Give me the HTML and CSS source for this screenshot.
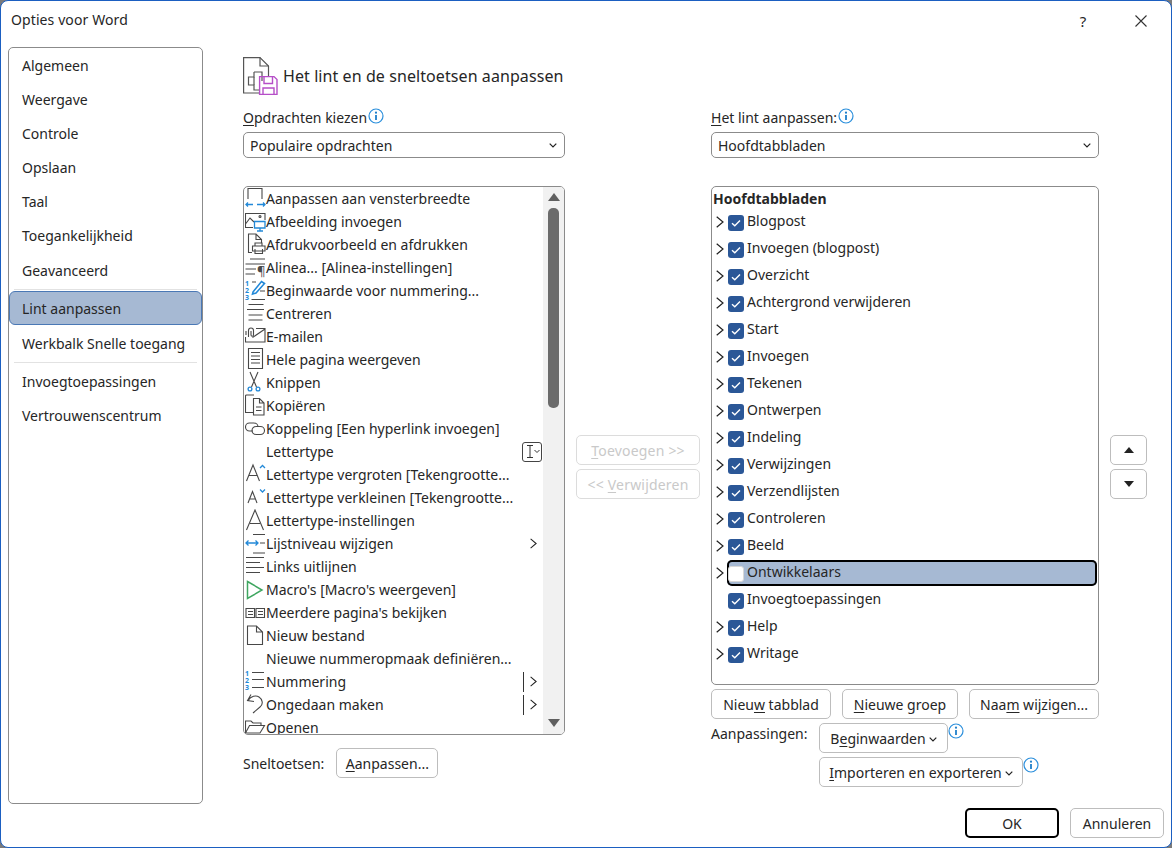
FILE: index.html
```html
<!DOCTYPE html>
<html lang="nl">

<head>
    <meta charset="UTF-8">
    <title>Opties voor Word</title>
    <link rel="stylesheet" href="styles.css">
</head>

<body>
    <svg class="defs" xmlns="http://www.w3.org/2000/svg">
        <symbol id="chev" viewBox="0 0 8 12"><path d="M.7.7L7 6L.7 11.3" fill="none" stroke="#222" stroke-width="1.2"/></symbol>
        <symbol id="tick" viewBox="0 0 16 16"><path d="M4 8.2L6.8 10.8L12 5.6" fill="none" stroke="#fff" stroke-width="1.4"/></symbol>
        <symbol id="info" viewBox="0 0 16 16"><circle cx="8" cy="8" r="7" fill="#fff" stroke="#2b8fdc" stroke-width="1.2"/><path d="M8 7V12" stroke="#1f7fca" stroke-width="1.8"/><circle cx="8" cy="4.7" r="1.1" fill="#1f7fca"/></symbol>
        <symbol id="down" viewBox="0 0 8 5"><path d="M.7.7L4 4L7.3.7" fill="none" stroke="#222" stroke-width="1.2"/></symbol>
    </svg>

    <div class="window">
        <div class="titlebar">
            <span class="title">Opties voor Word</span>
            <span class="title-btn">?</span>
            <span class="title-btn">
                <svg width="12" height="12" viewBox="0 0 12 12"><path d="M.5.5L11.5 11.5M11.5.5L.5 11.5" stroke="#333" stroke-width="1.1"/></svg>
            </span>
        </div>

        <div class="dialog-body">
            <ul class="sidebar">
                <li>Algemeen</li>
                <li>Weergave</li>
                <li>Controle</li>
                <li>Opslaan</li>
                <li>Taal</li>
                <li>Toegankelijkheid</li>
                <li class="advanced">Geavanceerd</li>
                <li class="divider"></li>
                <li class="active">Lint aanpassen</li>
                <li>Werkbalk Snelle toegang</li>
                <li class="divider"></li>
                <li>Invoegtoepassingen</li>
                <li>Vertrouwenscentrum</li>
            </ul>

            <div class="main">
                <div class="heading">
                    <svg class="heading-icon" width="35" height="38" viewBox="0 0 35 38">
                        <g fill="none" stroke="#555" stroke-width="1.2">
                            <path d="M16 36H.6V.6H17L25.5 9V19"/>
                            <path d="M17 .6V9H25.5"/>
                            <path d="M11 15H19V24M11 15V20H5.5V28H11V33H16"/>
                            <path d="M11 20V28"/>
                        </g>
                        <g fill="none" stroke="#b64fc8" stroke-width="1.4">
                            <path d="M16.6 19.6H31L34 22.6V37.4H16.6Z"/>
                            <path d="M21 19.6V26.5H29.5V19.6M20 37.4V31H31V37.4"/>
                        </g>
                    </svg>
                    <span>Het lint en de sneltoetsen aanpassen</span>
                </div>

                <div class="columns">
                    <div class="col-left">
                        <div class="field-label"><span><u>O</u>pdrachten kiezen</span><svg class="info"><use href="#info"/></svg></div>
                        <div class="select"><span>Populaire opdrachten</span><svg class="down"><use href="#down"/></svg></div>

                        <div class="list command-list">
                            <ul class="commands">
                                <li>
                                    <svg class="ico" viewBox="0 0 21 23"><path d="M3 12V1.5H17V12"/><path class="blue" d="M1 17.5H8M3 15.5L1 17.5L3 19.5M12 17.5H20M18 15.5L20 17.5L18 19.5"/></svg>
                                    Aanpassen aan vensterbreedte
                                </li>
                                <li>
                                    <svg class="ico" viewBox="0 0 21 23"><path d="M8 17.5H.5V3.5H20V10M.5 14L5 8L9 12"/><circle cx="15" cy="6.5" r="1"/><path class="blue" d="M9.5 11.5H20V18H9.5ZM15 18V21M12 21H18"/></svg>
                                    Afbeelding invoegen
                                </li>
                                <li>
                                    <svg class="ico" viewBox="0 0 21 23"><path d="M7 19.5H3.5V1H11L16.5 6.5V10M11 1V6.5H16.5"/><path d="M7.5 13H20V18H7.5ZM10 13V10H17V13M10 16V20.5H17.5V16"/></svg>
                                    Afdrukvoorbeeld en afdrukken
                                </li>
                                <li>
                                    <svg class="ico" viewBox="0 0 21 23"><path d="M5 3H20M.5 8H20M.5 13H11M.5 18H10"/><text class="ico-text para" x="12" y="20">¶</text></svg>
                                    Alinea... [Alinea-instellingen]
                                </li>
                                <li>
                                    <svg class="ico" viewBox="0 0 21 23"><path d="M7 3H11M15 12H20M6.5 20.5H20"/><path class="blue thick" d="M8 13L16.5 2.5L19.5 4.5L11 14L7.5 15Z"/><text class="ico-text" x="0" y="7">1</text><text class="ico-text" x="0" y="14">2</text><text class="ico-text" x="0" y="21">3</text></svg>
                                    Beginwaarde voor nummering...
                                </li>
                                <li>
                                    <svg class="ico" viewBox="0 0 21 23"><path d="M3.5 2.5H18.5M2 7.5H19M3.5 13H17.5M3.5 18H17.5"/></svg>
                                    Centreren
                                </li>
                                <li>
                                    <svg class="ico" viewBox="0 0 21 23"><path d="M11 3.5H20V17H.5V12M7.5 12.5L20 4"/><path d="M3.5 12V5.5A2.5 2.5 0 0 1 8.5 5.5V10A1.2 1.2 0 0 1 6 10V6M1 10V6"/></svg>
                                    E-mailen
                                </li>
                                <li>
                                    <svg class="ico" viewBox="0 0 21 23"><path d="M3.5 .5H17.5V20.5H3.5ZM6 4.5H15M6 8H15M6 11.5H15M6 15H15"/></svg>
                                    Hele pagina weergeven
                                </li>
                                <li>
                                    <svg class="ico" viewBox="0 0 21 23"><path d="M5 1L11.5 16M13 1L6.5 16"/><circle class="blue" cx="5" cy="18" r="1.9"/><circle class="blue" cx="13" cy="18" r="1.9"/></svg>
                                    Knippen
                                </li>
                                <li>
                                    <svg class="ico" viewBox="0 0 21 23"><path d="M8 18.5H.5V2Q.5 1 1.5 1H9"/><path d="M8.5 21V4.5H14.5L19 9V21ZM14.5 4.5V9H19M11 13H16.5M11 16.5H16.5"/></svg>
                                    Kopiëren
                                </li>
                                <li>
                                    <svg class="ico" viewBox="0 0 21 23"><path d="M8 14H4.5A4 4 0 0 1 4.5 6H9A4 4 0 0 1 13 10"/><path d="M7 13.5A4 4 0 0 1 11 9.5H15.5A4 4 0 0 1 15.5 17.5H11A4 4 0 0 1 7 13.5Z"/></svg>
                                    Koppeling [Een hyperlink invoegen]
                                </li>
                                <li>
                                    <span class="ico ico-blank"></span>
                                    Lettertype
                                    <span class="combo-box"><svg width="17" height="17" viewBox="0 0 17 17"><path d="M3 2.5H9M3 14.5H9M6 2.5V14.5" fill="none" stroke="#333"/><path d="M10.5 7L13 9.5L15.5 7" fill="none" stroke="#333"/></svg></span>
                                </li>
                                <li>
                                    <svg class="ico" viewBox="0 0 21 23"><path d="M1.5 18L8 2L14.5 18M4 12.5H12"/><path class="blue" d="M15 5L17.5 2.5L20 5"/></svg>
                                    Lettertype vergroten [Tekengrootte...
                                </li>
                                <li>
                                    <svg class="ico" viewBox="0 0 21 23"><path d="M3 17L7.5 5.5L12 17M5 13H10"/><path class="blue" d="M15 3.5L17.5 6L20 3.5"/></svg>
                                    Lettertype verkleinen [Tekengrootte...
                                </li>
                                <li>
                                    <svg class="ico" viewBox="0 0 21 23"><path d="M1.5 21L10 1L18.5 21M5 14.5H15"/></svg>
                                    Lettertype-instellingen
                                </li>
                                <li>
                                    <svg class="ico" viewBox="0 0 21 23"><path d="M8 2.5H20M15 11H20M8 21H20"/><path class="blue" d="M1 11H13M3.5 8.5L1 11L3.5 13.5M10.5 8.5L13 11L10.5 13.5"/></svg>
                                    Lijstniveau wijzigen
                                    <svg class="row-chev"><use href="#chev"/></svg>
                                </li>
                                <li>
                                    <svg class="ico" viewBox="0 0 21 23"><path d="M1 2.5H19M1 7.5H15M1 12.5H19M1 17.5H15"/></svg>
                                    Links uitlijnen
                                </li>
                                <li>
                                    <svg class="ico" viewBox="0 0 21 23"><path class="green" d="M2.5 3.5L17 12L2.5 20.5Z"/></svg>
                                    Macro's [Macro's weergeven]
                                </li>
                                <li>
                                    <svg class="ico" viewBox="0 0 21 23"><path d="M1 7.5H9.5V16.5H1ZM11 7.5H19.5V16.5H11ZM3 10.5H8M3 13.5H8M13 10.5H18M13 13.5H18"/></svg>
                                    Meerdere pagina's bekijken
                                </li>
                                <li>
                                    <svg class="ico" viewBox="0 0 21 23"><path d="M2.5 20.5V2H11.5L17.5 8V20.5ZM11.5 2V8H17.5"/></svg>
                                    Nieuw bestand
                                </li>
                                <li>
                                    <span class="ico ico-blank"></span>
                                    Nieuwe nummeropmaak definiëren...
                                </li>
                                <li>
                                    <svg class="ico" viewBox="0 0 21 23"><path d="M7 2.5H19M7 9.5H19M7 17.5H19"/><text class="ico-text" x="0" y="6">1</text><text class="ico-text" x="0" y="13">2</text><text class="ico-text" x="0" y="20">3</text></svg>
                                    Nummering
                                    <span class="split-bar"></span><svg class="split-chev"><use href="#chev"/></svg>
                                </li>
                                <li>
                                    <svg class="ico" viewBox="0 0 21 23"><path d="M3 7.5C6 3 11 2 14 4S19 11 15 14L8 20M6 1.5L2.5 7.5L9 8.5"/></svg>
                                    Ongedaan maken
                                    <span class="split-bar"></span><svg class="split-chev"><use href="#chev"/></svg>
                                </li>
                                <li>
                                    <svg class="ico" viewBox="0 0 21 23"><path d="M.5 17V5H6L8 7H16V9.5M.5 17H15L19.5 9.5H4.5Z"/></svg>
                                    Openen
                                </li>
                            </ul>
                            <div class="scrollbar">
                                <span class="scroll-arrow up"></span>
                                <span class="scroll-thumb"></span>
                                <span class="scroll-arrow dn"></span>
                            </div>
                        </div>

                        <div class="shortcut-row">
                            <span>Sneltoetsen:</span>
                            <button class="btn btn-shortcut"><u>A</u>anpassen...</button>
                        </div>
                    </div>

                    <div class="col-mid">
                        <button class="btn btn-disabled"><u>T</u>oevoegen &gt;&gt;</button>
                        <button class="btn btn-disabled">&lt;&lt; <u>V</u>erwijderen</button>
                    </div>

                    <div class="col-right">
                        <div class="field-label"><span><u>H</u>et lint aanpassen:</span><svg class="info"><use href="#info"/></svg></div>
                        <div class="select"><span>Hoofdtabbladen</span><svg class="down"><use href="#down"/></svg></div>

                        <div class="list tab-list">
                            <div class="tab-title">Hoofdtabbladen</div>
                            <ul class="tabs">
                                <li><svg class="chev"><use href="#chev"/></svg><div class="tab-label"><span class="check"><svg><use href="#tick"/></svg></span><span>Blogpost</span></div></li>
                                <li><svg class="chev"><use href="#chev"/></svg><div class="tab-label"><span class="check"><svg><use href="#tick"/></svg></span><span>Invoegen (blogpost)</span></div></li>
                                <li><svg class="chev"><use href="#chev"/></svg><div class="tab-label"><span class="check"><svg><use href="#tick"/></svg></span><span>Overzicht</span></div></li>
                                <li><svg class="chev"><use href="#chev"/></svg><div class="tab-label"><span class="check"><svg><use href="#tick"/></svg></span><span>Achtergrond verwijderen</span></div></li>
                                <li><svg class="chev"><use href="#chev"/></svg><div class="tab-label"><span class="check"><svg><use href="#tick"/></svg></span><span>Start</span></div></li>
                                <li><svg class="chev"><use href="#chev"/></svg><div class="tab-label"><span class="check"><svg><use href="#tick"/></svg></span><span>Invoegen</span></div></li>
                                <li><svg class="chev"><use href="#chev"/></svg><div class="tab-label"><span class="check"><svg><use href="#tick"/></svg></span><span>Tekenen</span></div></li>
                                <li><svg class="chev"><use href="#chev"/></svg><div class="tab-label"><span class="check"><svg><use href="#tick"/></svg></span><span>Ontwerpen</span></div></li>
                                <li><svg class="chev"><use href="#chev"/></svg><div class="tab-label"><span class="check"><svg><use href="#tick"/></svg></span><span>Indeling</span></div></li>
                                <li><svg class="chev"><use href="#chev"/></svg><div class="tab-label"><span class="check"><svg><use href="#tick"/></svg></span><span>Verwijzingen</span></div></li>
                                <li><svg class="chev"><use href="#chev"/></svg><div class="tab-label"><span class="check"><svg><use href="#tick"/></svg></span><span>Verzendlijsten</span></div></li>
                                <li><svg class="chev"><use href="#chev"/></svg><div class="tab-label"><span class="check"><svg><use href="#tick"/></svg></span><span>Controleren</span></div></li>
                                <li><svg class="chev"><use href="#chev"/></svg><div class="tab-label"><span class="check"><svg><use href="#tick"/></svg></span><span>Beeld</span></div></li>
                                <li><svg class="chev"><use href="#chev"/></svg><div class="tab-label selected"><span class="check off"></span><span>Ontwikkelaars</span></div></li>
                                <li><span class="chev"></span><div class="tab-label"><span class="check"><svg><use href="#tick"/></svg></span><span>Invoegtoepassingen</span></div></li>
                                <li><svg class="chev"><use href="#chev"/></svg><div class="tab-label"><span class="check"><svg><use href="#tick"/></svg></span><span>Help</span></div></li>
                                <li><svg class="chev"><use href="#chev"/></svg><div class="tab-label"><span class="check"><svg><use href="#tick"/></svg></span><span>Writage</span></div></li>
                            </ul>
                        </div>

                        <div class="tab-buttons">
                            <button class="btn btn-newtab">Nieu<u>w</u> tabblad</button>
                            <button class="btn btn-newgroup"><u>N</u>ieuwe groep</button>
                            <button class="btn btn-rename">Naa<u>m</u> wijzigen...</button>
                        </div>

                        <div class="custom-row">
                            <span class="custom-label">Aanpassingen:</span>
                            <div class="custom-stack">
                                <div class="custom-item">
                                    <button class="btn btn-reset">B<u>e</u>ginwaarden<svg class="down"><use href="#down"/></svg></button>
                                    <svg class="info"><use href="#info"/></svg>
                                </div>
                                <div class="custom-item">
                                    <button class="btn btn-import"><u>I</u>mporteren en exporteren<svg class="down"><use href="#down"/></svg></button>
                                    <svg class="info"><use href="#info"/></svg>
                                </div>
                            </div>
                        </div>
                    </div>

                    <div class="col-arrows">
                        <button class="btn btn-arrow"><span class="tri-up"></span></button>
                        <button class="btn btn-arrow"><span class="tri-down"></span></button>
                    </div>
                </div>
            </div>
        </div>

        <div class="dialog-footer">
            <button class="btn btn-ok">OK</button>
            <button class="btn btn-cancel">Annuleren</button>
        </div>
    </div>
</body>

</html>
```
FILE: styles.css
```css
:root {
    --text-color: #262626;
    --border-strong: #8b8b8b;
    --border-light: #bdbdbd;
    --select-color: #a6b9d3;
    --check-color: #2b5797;
    --icon-grey: #484848;
    --icon-blue: #2389d8;
}

* {
    margin: 0;
    padding: 0;
    box-sizing: border-box;
}

html {
    background: #7a7a7a;
}

body {
    font-family: "Noto Sans", sans-serif;
    font-size: 14px;
    color: var(--text-color);
}

ul {
    list-style: none;
}

u {
    text-underline-offset: 2px;
}

.defs {
    display: none;
}

.window {
    width: 1172px;
    height: 848px;
    background: #fff;
    border: 1px solid #1b5fc1;
    border-radius: 8px;
    overflow: hidden;
}

/* Title bar */
.titlebar {
    height: 39px;
    padding-right: 1px;
    display: flex;
    align-items: center;
}

.title {
    flex: 1;
    padding: 0 0 2px 10px;
    letter-spacing: 0.1px;
}

.title-btn {
    width: 58px;
    height: 39px;
    display: flex;
    align-items: center;
    justify-content: center;
    font-size: 15px;
}

/* Layout */
.dialog-body {
    display: flex;
    height: 764px;
    padding: 7px 0 0 7px;
}

.sidebar {
    width: 195px;
    height: 757px;
    flex-shrink: 0;
    border: 1px solid var(--border-strong);
    border-radius: 5px;
}

.sidebar li {
    height: 34px;
    padding-left: 13px;
    display: flex;
    align-items: center;
}

.sidebar li.advanced {
    margin-top: 1px;
}

.sidebar li.divider {
    height: 1px;
    margin: 2px 5px 1px;
    padding: 0;
    background: #e2e2e2;
}

.sidebar li.active {
    background: var(--select-color);
    border: 1px solid #4a78b5;
    border-radius: 6px;
    padding-left: 12px;
    margin-bottom: 1px;
}

.main {
    margin-left: 40px;
    padding-top: 10px;
}

.heading {
    height: 38px;
    display: flex;
    align-items: center;
    gap: 5px;
    font-size: 16px;
    letter-spacing: 0.08px;
}

.heading-icon {
    align-self: flex-start;
}

.columns {
    display: flex;
    gap: 11px;
    margin-top: 13px;
}

.col-left {
    width: 322px;
}

.col-mid {
    width: 124px;
    padding-top: 327px;
    display: flex;
    flex-direction: column;
    gap: 4px;
}

.col-right {
    width: 388px;
}

.col-arrows {
    width: 37px;
    padding-top: 327px;
    display: flex;
    flex-direction: column;
    gap: 4px;
}

/* Fields */
.field-label {
    height: 24px;
    display: flex;
    align-items: flex-start;
}

.info {
    width: 16px;
    height: 16px;
    flex-shrink: 0;
}

.field-label .info {
    margin-left: 1px;
}

.select {
    height: 26px;
    border: 1px solid var(--border-strong);
    border-radius: 5px;
    display: flex;
    align-items: center;
    justify-content: space-between;
    padding: 0 7px 0 6px;
}

.down {
    width: 8px;
    height: 5px;
    flex-shrink: 0;
}

.list {
    margin-top: 28px;
    border: 1px solid var(--border-strong);
    border-radius: 5px;
    overflow: hidden;
}

/* Command list */
.command-list {
    height: 549px;
    display: flex;
}

.commands {
    flex: 1;
    padding-left: 1px;
}

.commands li {
    height: 23px;
    display: flex;
    align-items: center;
    white-space: nowrap;
    padding-right: 1px;
}

.ico {
    width: 21px;
    height: 23px;
    flex-shrink: 0;
    fill: none;
    stroke: var(--icon-grey);
    stroke-width: 1.1;
}

.ico-blank {
    display: inline-block;
}

.ico .blue {
    stroke: var(--icon-blue);
    stroke-width: 1.3;
}

.ico .thick {
    stroke-width: 1.6;
}

.ico .green {
    stroke: #3fa660;
    stroke-width: 1.5;
}

.ico-text {
    font-family: "Noto Sans", sans-serif;
    font-size: 7px;
    font-weight: 700;
    fill: var(--icon-blue);
    stroke: none;
}

.ico-text.para {
    font-size: 13px;
    font-weight: 400;
    fill: var(--icon-grey);
}

.combo-box {
    margin-left: auto;
    width: 20px;
    height: 20px;
    border: 1px solid #444;
    border-radius: 3px;
    display: flex;
    align-items: center;
    justify-content: center;
}

.row-chev {
    margin-left: auto;
    margin-right: 5px;
    width: 7px;
    height: 11px;
}

.split-bar {
    margin-left: auto;
    width: 1px;
    height: 20px;
    background: #333;
}

.split-chev {
    margin: 0 5px 0 6px;
    width: 7px;
    height: 11px;
}

.scrollbar {
    width: 21px;
    flex-shrink: 0;
    background: #f1f1f1;
    display: flex;
    flex-direction: column;
    align-items: center;
}

.scroll-thumb {
    width: 11px;
    height: 200px;
    margin-top: 7px;
    background: #6b6b6b;
    border-radius: 5px;
}

.scroll-arrow {
    width: 0;
    height: 0;
    border-left: 6px solid transparent;
    border-right: 6px solid transparent;
}

.scroll-arrow.up {
    margin-top: 6px;
    border-bottom: 8px solid #5f5f5f;
}

.scroll-arrow.dn {
    margin-top: auto;
    margin-bottom: 7px;
    border-top: 8px solid #5f5f5f;
}

/* Buttons */
.btn {
    font-family: inherit;
    font-size: 14px;
    color: var(--text-color);
    height: 30px;
    background: #fff;
    border: 1px solid var(--border-light);
    border-radius: 5px;
}

.btn .down {
    margin-left: 3px;
    vertical-align: 2px;
}

.btn-disabled {
    color: #c9c9c9;
    border-color: #dcdcdc;
    letter-spacing: 0.2px;
}

.shortcut-row {
    margin-top: 13px;
    display: flex;
    align-items: center;
    gap: 12px;
}

.btn-shortcut {
    width: 102px;
}

/* Tab list */
.tab-list {
    height: 499px;
}

.tab-title {
    height: 21px;
    padding: 2px 0 0 1px;
    font-weight: 700;
}

.tabs li {
    height: 27px;
    display: flex;
    padding-left: 4px;
}

.chev {
    width: 8px;
    height: 12px;
    margin: 8px 3px 0 0;
    flex-shrink: 0;
}

.tab-label {
    flex: 1;
    margin-top: 1px;
    padding-left: 1px;
    display: flex;
    align-items: center;
    gap: 3px;
    border-radius: 5px;
    margin-right: 1px;
}

.tab-label span:last-child {
    margin-top: -4px;
}

.tab-label.selected {
    background: var(--select-color);
    box-shadow: inset 0 0 0 2px #000;
}

.tab-label .check {
    width: 16px;
    height: 16px;
    margin-top: 2px;
    background: var(--check-color);
    border-radius: 3px;
    flex-shrink: 0;
}

.tab-label .check svg {
    display: block;
    width: 16px;
    height: 16px;
}

.tab-label .check.off {
    background: #fff;
    border: 1px solid #d8d8d8;
}

.tab-buttons {
    margin-top: 4px;
    display: flex;
    justify-content: space-between;
}

.btn-newtab {
    width: 120px;
}

.btn-newgroup {
    width: 116px;
}

.btn-rename {
    width: 130px;
}

.custom-row {
    margin-top: 4px;
    display: flex;
}

.custom-label {
    width: 108px;
    padding-top: 1px;
}

.custom-stack {
    display: flex;
    flex-direction: column;
    gap: 4px;
}

.custom-item {
    display: flex;
    align-items: flex-start;
}

.btn-reset {
    width: 129px;
}

.btn-import {
    width: 204px;
}

.btn-arrow {
    width: 37px;
    display: flex;
    align-items: center;
    justify-content: center;
}

.tri-up {
    border-left: 5px solid transparent;
    border-right: 5px solid transparent;
    border-bottom: 6px solid #222;
}

.tri-down {
    border-left: 5px solid transparent;
    border-right: 5px solid transparent;
    border-top: 6px solid #222;
}

/* Footer */
.dialog-footer {
    margin-top: 4px;
    padding-right: 7px;
    display: flex;
    justify-content: flex-end;
    gap: 11px;
}

.btn-ok,
.btn-cancel {
    width: 94px;
}

.btn-ok {
    border: 2px solid #000;
}
```
